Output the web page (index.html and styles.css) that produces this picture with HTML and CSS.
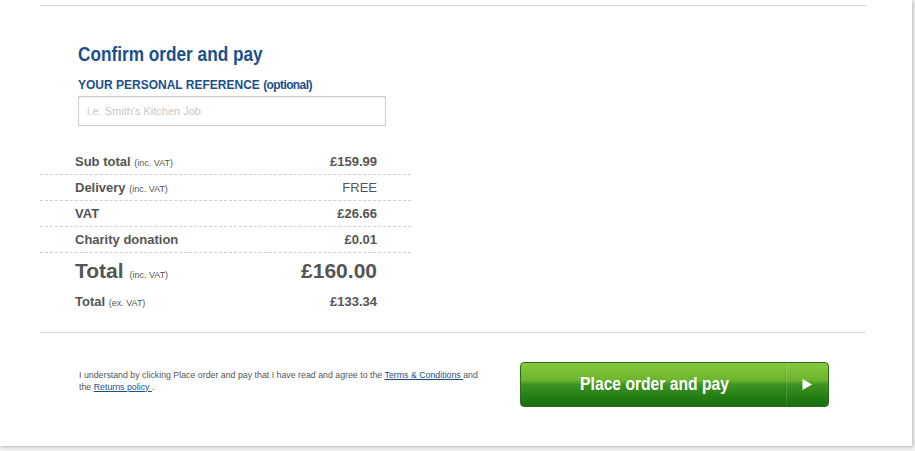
FILE: index.html
```html
<!DOCTYPE html>
<html lang="en">
<head>
<meta charset="utf-8">
<title>Confirm order and pay</title>
<link rel="stylesheet" href="styles.css">
</head>
<body>
<div class="card">
  <section class="confirm">
    <div class="intro">
      <h1 class="title">Confirm order and pay</h1>
      <label class="ref-label" for="ref">YOUR PERSONAL REFERENCE <span class="opt">(optional)</span></label>
      <input class="ref-input" id="ref" type="text" placeholder="i.e. Smith's Kitchen Job">
    </div>
    <div class="summary">
      <div class="row dashed"><span class="lbl">Sub total <small>(inc. VAT)</small></span><span class="val">£159.99</span></div>
      <div class="row dashed"><span class="lbl">Delivery <small>(inc. VAT)</small></span><span class="val light">FREE</span></div>
      <div class="row dashed"><span class="lbl">VAT</span><span class="val">£26.66</span></div>
      <div class="row dashed"><span class="lbl">Charity donation</span><span class="val">£0.01</span></div>
      <div class="row total"><span class="lbl">Total <small>(inc. VAT)</small></span><span class="val">£160.00</span></div>
      <div class="row"><span class="lbl">Total <small>(ex. VAT)</small></span><span class="val">£133.34</span></div>
    </div>
  </section>
  <div class="footer">
    <p class="terms">I understand by clicking Place order and pay that I have read and agree to the <a href="#">Terms &amp; Conditions </a> and the <a href="#">Returns policy </a>.</p>
    <button class="pay" type="button"><span class="pay-text"><span class="pay-label">Place order and pay</span></span><span class="pay-arrow"><svg width="10" height="11" viewBox="0 0 10 11"><path d="M0.5 0 L10 5.5 L0.5 11 Z" fill="#fff"/></svg></span></button>
  </div>
</div>
</body>
</html>
```

FILE: styles.css
```css
html, body {
  margin: 0;
  padding: 0;
}
body {
  background: #f2f2f2;
  font-family: "Liberation Sans", Arial, sans-serif;
  color: #555;
  width: 915px;
  height: 451px;
  overflow: hidden;
}
.card {
  width: 912px;
  height: 446px;
  background: #fff;
  box-shadow: 1px 1px 3px rgba(0,0,0,0.25);
  padding: 5px 46px 0 40px;
  box-sizing: border-box;
}
.confirm {
  border-top: 1px solid #d9d9d9;
  border-bottom: 1px solid #d9d9d9;
  height: 328px;
  box-sizing: border-box;
  padding-top: 35px;
}
.intro {
  padding-left: 38px;
  display: flex;
  flex-direction: column;
  align-items: flex-start;
}
.title {
  margin: 0;
  font-family: "Liberation Sans", Arial, sans-serif;
  font-weight: bold;
  font-size: 21px;
  line-height: 26px;
  color: #1a4f8c;
  transform: scaleX(0.82);
  transform-origin: left center;
  white-space: nowrap;
}
.ref-label {
  margin-top: 11px;
  font-size: 12px;
  line-height: 14px;
  font-weight: bold;
  color: #1a4f8c;
}
.ref-label .opt {
  font-size: 12px;
  letter-spacing: -0.6px;
}
.ref-input {
  margin-top: 4px;
  width: 308px;
  height: 30px;
  box-sizing: border-box;
  border: 1px solid #cfcfcf;
  box-shadow: inset 0 1px 2px rgba(0,0,0,0.08);
  padding: 0 8px;
  font-family: "Liberation Sans", Arial, sans-serif;
  font-size: 11px;
  color: #555;
  outline: none;
}
.ref-input::placeholder {
  color: #c8c8c8;
}
.summary {
  width: 371px;
  margin-top: 23px;
}
.row {
  display: flex;
  justify-content: space-between;
  align-items: center;
  height: 26px;
  box-sizing: border-box;
  padding: 0 34px 0 35px;
  font-size: 13px;
  font-weight: bold;
  color: #555;
}
.row.dashed {
  border-bottom: 1px dashed #cfcfcf;
}
.row small {
  font-size: 9px;
  font-weight: normal;
}
.val.light {
  font-weight: normal;
}
.row.total {
  height: 35px;
  font-size: 21px;
  padding-top: 1px;
}
.row.total small {
  font-size: 9px;
}
.footer {
  display: flex;
  align-items: center;
  justify-content: space-between;
  height: 102px;
  padding: 0 37px 0 39px;
}
.terms {
  margin: 0;
  width: 405px;
  font-size: 8.8px;
  line-height: 12px;
  color: #555;
  padding-bottom: 7px;
}
.terms a {
  color: #1a4f8c;
}
.pay {
  display: flex;
  align-items: stretch;
  width: 309px;
  height: 45px;
  padding: 0;
  border: 1px solid #2d6b1c;
  border-radius: 4px;
  background: linear-gradient(to bottom, #86c83e 0%, #6cb52e 40%, #3f9421 50%, #237d14 80%, #1b6e10 100%);
  color: #fff;
  cursor: pointer;
}
.pay-text {
  flex: 1;
  display: flex;
  align-items: center;
  justify-content: center;
  font-family: "Liberation Sans", Arial, sans-serif;
  font-weight: bold;
  font-size: 18px;
  padding-left: 3px;
}
.pay-label {
  display: inline-block;
  white-space: nowrap;
  transform: scaleX(0.87);
}
.pay-arrow {
  width: 39px;
  display: flex;
  align-items: center;
  justify-content: center;
  border-left: 1px solid rgba(255,255,255,0.15);
  box-shadow: -1px 0 0 rgba(0,0,0,0.08);
  padding-right: 2px;
}
```
